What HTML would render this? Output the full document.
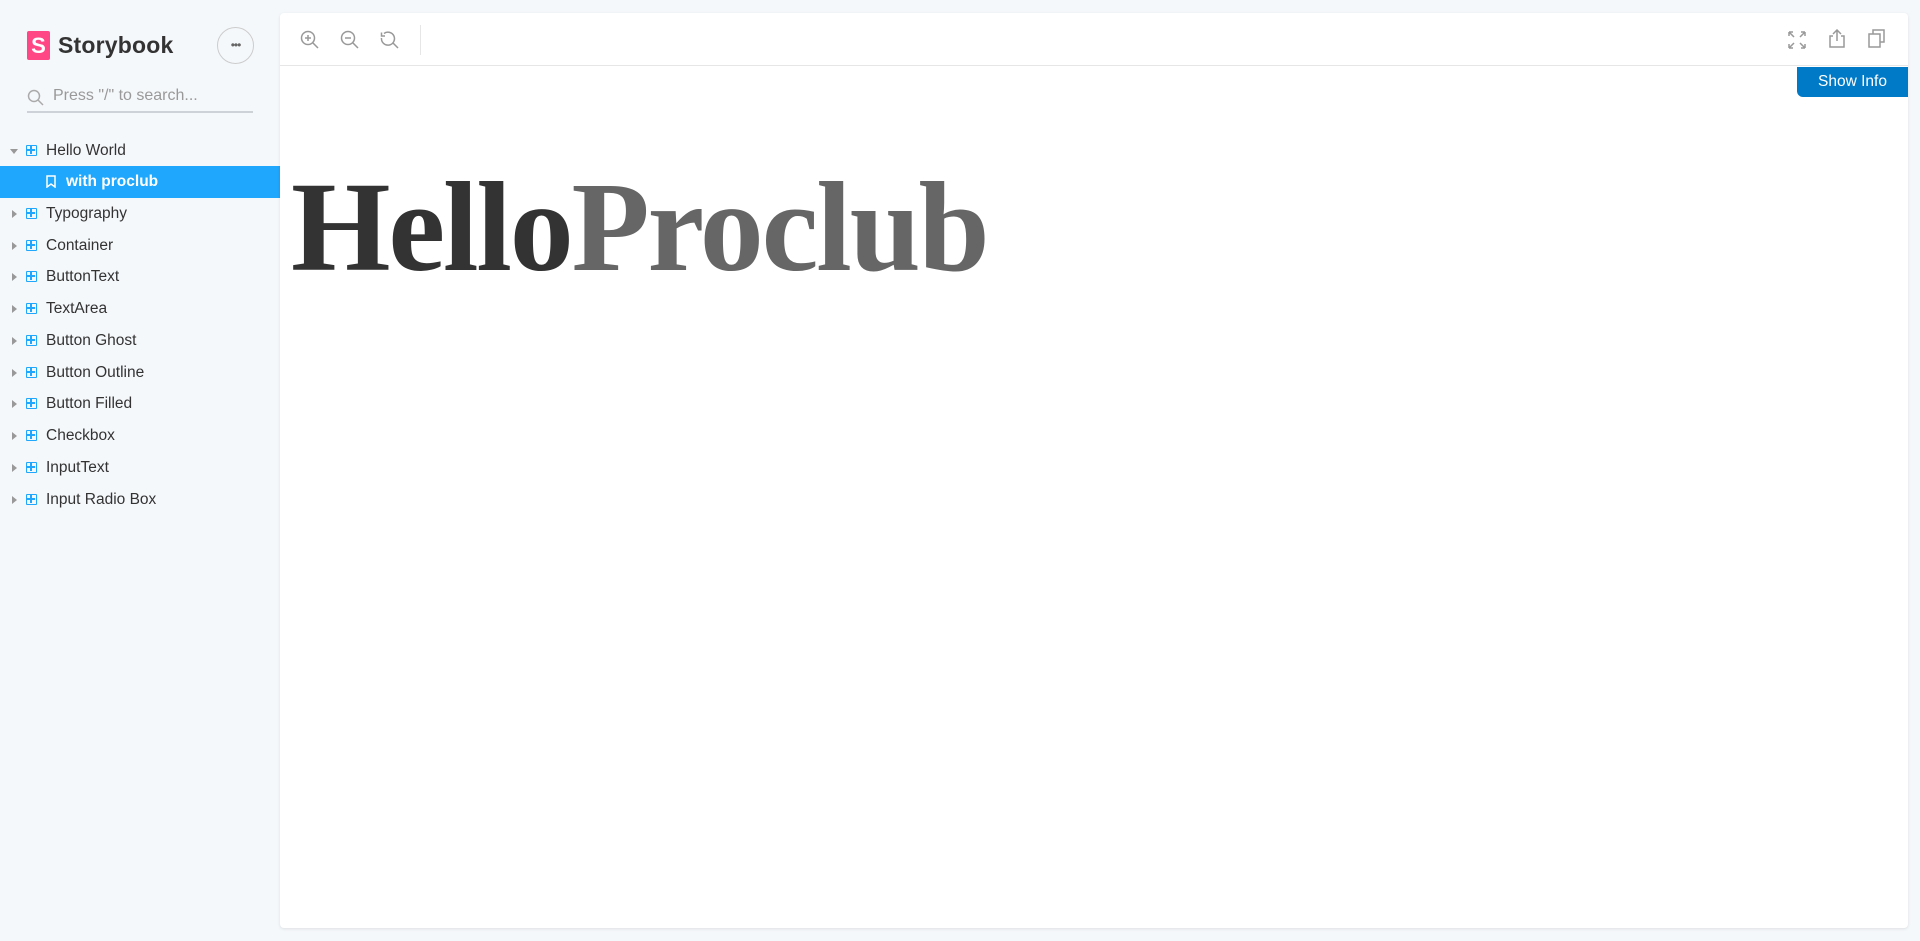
<!DOCTYPE html>
<html><head><meta charset="utf-8"><style>
*{box-sizing:border-box;margin:0;padding:0}
body{width:1920px;height:941px;background:#f5f8fb;font-family:"Liberation Sans",sans-serif;position:relative;overflow:hidden;color:#333}
.logo{position:absolute;left:27px;top:31px;width:23px;height:29px;background:#ff4785;border-radius:2px;color:#fff;font-weight:bold;font-size:22px;text-align:center;line-height:29px}
.brand{position:absolute;left:58px;top:32px;font-size:23px;font-weight:bold;color:#333;letter-spacing:0.2px}
.more{position:absolute;left:217px;top:27px;width:37px;height:37px;border:1px solid #ccc;border-radius:50%;text-align:center;line-height:34px;font-size:12px;color:#666;letter-spacing:-1px}
.search{position:absolute;left:27px;top:84px;width:226px;height:29px;border-bottom:2px solid #ccd2d8}
.search span{position:absolute;left:26px;top:3px;font-size:16px;color:#999}
.row{position:absolute;left:0;width:280px;height:32px;font-size:15.5px;line-height:32px;color:#333}
.row .t{position:absolute;left:46px}
.row .arr{position:absolute;left:12px;top:12px;width:0;height:0;border-top:4px solid transparent;border-bottom:4px solid transparent;border-left:5px solid #999}
.row .ic{position:absolute;left:26px;top:10px;width:11px;height:11px;border:1.5px solid #1ea7fd;border-radius:1px}
.row .ic:before{content:"";position:absolute;left:3.3px;top:0;width:1.5px;height:8px;background:#1ea7fd}
.row .ic:after{content:"";position:absolute;top:3.3px;left:0;height:1.5px;width:8px;background:#1ea7fd}
.sel{background:#1ea7fd;color:#fff;font-weight:bold}
.panel{position:absolute;left:280px;top:13px;width:1628px;height:915px;background:#fff;border-radius:4px;box-shadow:0 1px 3px rgba(0,0,0,.1)}
.tb{position:absolute;left:0;top:0;width:100%;height:53px;border-bottom:1px solid #e6e6e6}
.btn{position:absolute;left:1517px;top:54px;width:111px;height:30px;background:#0079c6;color:#fff;font-size:15.5px;line-height:30px;text-align:center;border-radius:0 0 0 6px}
.big{position:absolute;left:11px;top:150px;font-family:"Liberation Serif",serif;font-weight:bold;font-size:128px;line-height:128px;letter-spacing:-2.2px;white-space:nowrap}
</style></head><body>
<div class="logo">S</div>
<div class="brand">Storybook</div>
<div class="more">•••</div>
<div class="search"><svg width="17" height="17" style="position:absolute;left:0;top:5px" fill="none" stroke="#aaa" stroke-width="1.5"><circle cx="7" cy="7" r="5.5"/><path d="M11 11l5 5"/></svg><span>Press "/" to search...</span></div>

<div class="row" style="top:135px"><div style="position:absolute;left:10px;top:14px;border-left:4px solid transparent;border-right:4px solid transparent;border-top:5px solid #999"></div><div class="ic"></div><span class="t">Hello World</span></div>
<div class="row sel" style="top:166px"><svg style="position:absolute;left:46px;top:9px" width="10" height="13" fill="none" stroke="#fff" stroke-width="1.5"><path d="M1 1h8v11l-4-3-4 3z"/></svg><span class="t" style="left:66px">with proclub</span></div>
<div class="row" style="top:198px"><div class="arr"></div><div class="ic"></div><span class="t">Typography</span></div>
<div class="row" style="top:230px"><div class="arr"></div><div class="ic"></div><span class="t">Container</span></div>
<div class="row" style="top:261px"><div class="arr"></div><div class="ic"></div><span class="t">ButtonText</span></div>
<div class="row" style="top:293px"><div class="arr"></div><div class="ic"></div><span class="t">TextArea</span></div>
<div class="row" style="top:325px"><div class="arr"></div><div class="ic"></div><span class="t">Button Ghost</span></div>
<div class="row" style="top:357px"><div class="arr"></div><div class="ic"></div><span class="t">Button Outline</span></div>
<div class="row" style="top:388px"><div class="arr"></div><div class="ic"></div><span class="t">Button Filled</span></div>
<div class="row" style="top:420px"><div class="arr"></div><div class="ic"></div><span class="t">Checkbox</span></div>
<div class="row" style="top:452px"><div class="arr"></div><div class="ic"></div><span class="t">InputText</span></div>
<div class="row" style="top:484px"><div class="arr"></div><div class="ic"></div><span class="t">Input Radio Box</span></div>

<div class="panel">
<div class="tb">
<svg style="position:absolute;left:20px;top:17px" width="20" height="20" fill="none" stroke="#999" stroke-width="1.5"><circle cx="8" cy="8" r="6.5"/><path d="M13 13l5 5M8 5v6M5 8h6"/></svg>
<svg style="position:absolute;left:60px;top:17px" width="20" height="20" fill="none" stroke="#999" stroke-width="1.5"><circle cx="8" cy="8" r="6.5"/><path d="M13 13l5 5M5 8h6"/></svg>
<svg style="position:absolute;left:100px;top:17px" width="20" height="20" fill="none" stroke="#999" stroke-width="1.5"><path d="M4 3.5A6.5 6.5 0 1 1 1.5 8M1.5 2.5v3.5h3.5"/><path d="M13 13l5 5"/></svg>
<div style="position:absolute;left:140px;top:12px;width:1px;height:30px;background:#e6e6e6"></div>
<svg style="position:absolute;left:1507px;top:17px" width="20" height="20" fill="none" stroke="#999" stroke-width="1.5"><path d="M2 2l5 5M18 2l-5 5M2 18l5-5M18 18l-5-5M2 2h4M2 2v4M18 2h-4M18 2v4M2 18h4M2 18v-4M18 18h-4M18 18v-4"/></svg>
<svg style="position:absolute;left:1548px;top:16px" width="18" height="20" fill="none" stroke="#999" stroke-width="1.5"><path d="M5 7H2v11h14V7h-3M9 12V1M5 5l4-4 4 4"/></svg>
<svg style="position:absolute;left:1587px;top:16px" width="20" height="20" fill="none" stroke="#999" stroke-width="1.5"><path d="M6 5V1h11v12h-4"/><rect x="2" y="5" width="11" height="13"/></svg>
</div>
<div class="btn">Show Info</div>
<div class="big"><span style="color:#333">Hello</span><span style="color:#666">Proclub</span></div>
</div>
</body></html>
